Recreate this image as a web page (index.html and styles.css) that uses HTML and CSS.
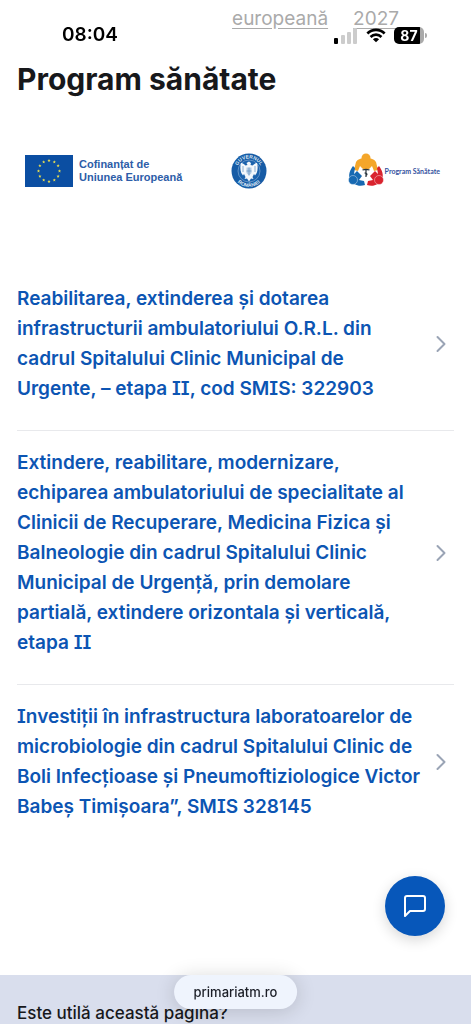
FILE: index.html
```
<!DOCTYPE html>
<html lang="ro">
<head>
    <meta charset="UTF-8">
    <meta name="viewport" content="width=device-width, initial-scale=1.0">
    <title>Program sănătate</title>
    <link rel="stylesheet" href="styles.css">
</head>
<body>
    <!-- Phone status bar -->
    <div class="status-bar">
        <span class="status-time">08:04</span>
        <div class="status-icons">
            <svg class="signal" width="24" height="17" viewBox="0 0 24 17" aria-hidden="true">
                <rect x="0" y="11" width="4" height="6" rx="1" fill="#000"/>
                <rect x="7" y="8" width="4" height="9" rx="1" fill="#ccc"/>
                <rect x="13" y="5" width="4" height="12" rx="1" fill="#ccc"/>
                <rect x="19" y="1" width="4" height="16" rx="1" fill="#ccc"/>
            </svg>
            <svg width="20" height="15" viewBox="0 0 22 16" fill="none" stroke="#000" stroke-width="3" aria-hidden="true">
                <path d="M1.500 5.800C7 .4 15 .4 20.500 5.800"/>
                <path d="M5 9.600c3.500-3.300 8.500-3.300 12 0"/>
                <path d="M11 15.500 7.600 12c2-1.700 4.800-1.700 6.800 0z" fill="#000" stroke="none"/>
            </svg>
            <span class="battery">87</span>
        </div>
    </div>

    <nav class="breadcrumb">
        <a href="#">europeană</a>
        <a href="#">2027</a>
    </nav>

    <main class="content">
        <h1>Program sănătate</h1>

        <div class="logos">
            <div class="logo-eu">
                <svg width="48" height="32" viewBox="0 0 48 32" aria-hidden="true">
                    <defs>
                        <path id="star" d="M0-1.700.45-.5 1.600-.5.7.25 1 1.400 0 .75-1 1.400-.7.25-1.600-.5-.45-.5z" fill="#f2e34c"/>
                    </defs>
                    <rect width="48" height="32" fill="#0b4ea2"/>
                    <use href="#star" x="24" y="5.500"/>
                    <use href="#star" x="29.300" y="6.900"/>
                    <use href="#star" x="33.100" y="10.700"/>
                    <use href="#star" x="34.500" y="16"/>
                    <use href="#star" x="33.100" y="21.300"/>
                    <use href="#star" x="29.300" y="25.100"/>
                    <use href="#star" x="24" y="26.500"/>
                    <use href="#star" x="18.700" y="25.100"/>
                    <use href="#star" x="14.900" y="21.300"/>
                    <use href="#star" x="13.500" y="16"/>
                    <use href="#star" x="14.900" y="10.700"/>
                    <use href="#star" x="18.700" y="6.900"/>
                </svg>
                <span>Cofinanțat de<br>Uniunea Europeană</span>
            </div>

            <svg class="logo-gov" width="36" height="36" viewBox="0 0 36 36" role="img" aria-label="Guvernul României">
                <defs>
                    <path id="arc-top" d="M5.500 18a12.500 12.500 0 0 1 25 0"/>
                    <path id="arc-bottom" d="M2 18a16 16 0 0 0 32 0"/>
                </defs>
                <circle cx="18" cy="18" r="17.500" fill="#175ca6"/>
                <circle cx="18" cy="18" r="11" fill="#1b62ac" stroke="#a9c5e2" stroke-width=".5"/>
                <text class="seal-text"><textPath href="#arc-top" startOffset="50%" text-anchor="middle">GUVERNUL</textPath></text>
                <text class="seal-text"><textPath href="#arc-bottom" startOffset="50%" text-anchor="middle">ROMÂNIEI</textPath></text>
                <path d="M18 8.500l2 1.500-.5 2 2 .5c2-2 3.500-2.500 4.500-2.500 1 3 .8 7-.3 10l-1.700 2.500-1-1.500-1.500 3 1 2-2.500-.5-2 3-2-3-2.500.5 1-2-1.500-3-1 1.500-1.700-2.500C9.200 17 9 13 10 10c1 0 2.500.5 4.500 2.500l2-.5-1-2z" fill="#f3f7fb"/>
                <path d="M15.500 14.500h5v5.500L18 22.500 15.500 20z" fill="#b3cbe3"/>
                <path d="M18 14.500v8M15.500 18h5M12 13v6M24 13v6" stroke="#5f8fc0" stroke-width=".7"/>
            </svg>

            <div class="logo-health">
                <svg width="36" height="36" viewBox="0 0 36 36" aria-hidden="true">
                    <path d="M8 9c2-3 5-4 10-4s8 1 10 4l2 8-4 1-2-5-3 3h-6l-3-3-2 5-4-1z" fill="#f4a62a"/>
                    <circle cx="18" cy="5" r="4.500" fill="#f4a62a"/>
                    <path d="M5 13c-3 4-5 9-3 13 3 6 9 8 15 6l-1-4-5-1 3-4-5-5-3 3 1-6z" fill="#1769b2"/>
                    <circle cx="5" cy="27" r="4.500" fill="#1769b2" stroke="#fff" stroke-width=".4"/>
                    <path d="M31 13c3 4 5 9 3 13-3 6-9 8-15 6l1-4 5-1-3-4 5-5 3 3-1-6z" fill="#d9232e"/>
                    <circle cx="31" cy="27" r="4.500" fill="#d9232e" stroke="#fff" stroke-width=".4"/>
                    <path d="M18 16v8M14.500 17c2-.8 5-.8 7 0M16.500 20c3 0 3 1.500 1.500 2.500" fill="none" stroke="#28343d" stroke-width="1.200"/>
                </svg>
                <span>Program Sănătate</span>
            </div>
        </div>

        <ul class="project-list">
            <li>
                <a class="project" href="#">
                    <span class="project-title">Reabilitarea, extinderea și dotarea infrastructurii ambulatoriului O.R.L. din cadrul Spitalului Clinic Municipal de Urgente, – etapa II, cod SMIS: 322903</span>
                    <svg class="chevron" width="10" height="18" viewBox="0 0 10 18" aria-hidden="true"><path d="M1.500 2 8.500 9l-7 7"/></svg>
                </a>
            </li>
            <li>
                <a class="project" href="#">
                    <span class="project-title">Extindere, reabilitare, modernizare, echiparea ambulatoriului de specialitate al Clinicii de Recuperare, Medicina Fizica și Balneologie din cadrul Spitalului Clinic Municipal de Urgență, prin demolare partială, extindere orizontala și verticală, etapa II</span>
                    <svg class="chevron" width="10" height="18" viewBox="0 0 10 18" aria-hidden="true"><path d="M1.500 2 8.500 9l-7 7"/></svg>
                </a>
            </li>
            <li>
                <a class="project" href="#">
                    <span class="project-title">Investiții în infrastructura laboratoarelor de microbiologie din cadrul Spitalului Clinic de Boli <span class="plain-i">Infecțioase</span> și Pneumoftiziologice Victor Babeș Timișoara”, SMIS 328145</span>
                    <svg class="chevron" width="10" height="18" viewBox="0 0 10 18" aria-hidden="true"><path d="M1.500 2 8.500 9l-7 7"/></svg>
                </a>
            </li>
        </ul>
    </main>

    <footer class="feedback">
        <p>Este utilă această pagină?</p>
    </footer>

    <button class="chat-button" type="button" aria-label="Deschide chat">
        <svg width="24" height="24" viewBox="0 0 24 24" aria-hidden="true">
            <path d="M2 22V4a2 2 0 0 1 2-2h16a2 2 0 0 1 2 2v11a2 2 0 0 1-2 2H7z"/>
        </svg>
    </button>

    <!-- Collapsed browser address bar -->
    <button class="address-pill" type="button">primariatm.ro</button>
</body>
</html>
```
FILE: styles.css
```
* { box-sizing: border-box; }
body { margin: 0; min-height: 100vh; display: flex; flex-direction: column; background: #fff; color: #17181b; font-family: Inter, "Liberation Sans", sans-serif; }
h1, p, ul { margin: 0; padding: 0; }
ul { list-style: none; }

/* Status bar */
.status-bar { position: fixed; top: 0; left: 0; right: 0; z-index: 2; display: flex; justify-content: space-between; align-items: center; padding: 24px 47px 0 62px; color: #000; }
.status-time { font-size: 19px; line-height: 22px; font-weight: 600; }
.status-icons { display: flex; align-items: center; gap: 8px; }
.battery { position: relative; width: 30px; height: 17px; border-radius: 5px; background: linear-gradient(90deg, #000 26px, #aaa 26px); color: #fff; font-size: 14px; line-height: 17px; font-weight: 700; text-align: center; }
.battery::after { content: ""; position: absolute; right: -3px; top: 6px; width: 2px; height: 5px; border-radius: 0 2px 2px 0; background: #aaa; }

/* Breadcrumb */
.breadcrumb { display: flex; justify-content: flex-end; gap: 25px; padding: 7px 72px 0 17px; font-size: 19px; line-height: 24px; }
.breadcrumb a { color: #aaa; text-underline-offset: 3px; }

/* Content */
.content { padding: 28px 17px 0; }
h1 { font-size: 30px; line-height: 40px; font-weight: 700; }
.logos { display: flex; justify-content: space-between; align-items: center; height: 56px; margin: 44px 14px 0 8px; }
.logo-eu { display: flex; align-items: center; gap: 6px; color: #2d5da8; font-family: "Liberation Sans", sans-serif; font-size: 11px; line-height: 13px; font-weight: 700; }
.logo-gov { margin-right: 32px; }
.seal-text { fill: #dce8f4; font-family: "Liberation Sans", sans-serif; font-size: 5px; font-weight: 700; }
.logo-health { display: flex; align-items: center; gap: 1px; color: #3552a0; font-family: Lato, sans-serif; font-size: 7px; line-height: 10px; font-weight: 700; }

/* Project list */
.project-list { margin-top: 68px; }
.project-list li + li { border-top: 1px solid #e8e9ec; }
.project { display: flex; align-items: center; justify-content: space-between; gap: 12px; padding: 17px 8px 26px 0; color: #0c55b3; text-decoration: none; }
.project-title { font-size: 19px; line-height: 30px; font-weight: 600; font-feature-settings: "cv08"; }
.plain-i { font-feature-settings: normal; }
.chevron { flex: none; fill: none; stroke: #9aa4b5; stroke-width: 2; stroke-linecap: round; stroke-linejoin: round; }

/* Feedback footer */
.feedback { margin-top: auto; padding: 27px 17px 0; background: #d9deed; font-size: 17px; line-height: 22px; font-weight: 500; }

/* Floating controls */
.chat-button { position: fixed; right: 26px; bottom: 88px; display: flex; align-items: center; justify-content: center; width: 60px; height: 60px; padding: 0; border: 0; border-radius: 50%; background: #0757ba; box-shadow: 0 4px 14px rgba(0,0,0,0.16); }
.chat-button svg { fill: none; stroke: #fff; stroke-width: 2; stroke-linejoin: round; }
.address-pill { position: fixed; left: 50%; bottom: 15px; transform: translateX(-50%); height: 34px; padding: 0 20px; border: 0; border-radius: 17px; background: #eff4fd; color: #1b1e27; box-shadow: 0 2px 20px rgba(0,0,0,0.16); font-family: Inter, sans-serif; font-size: 13px; line-height: 18px; font-weight: 500; }
```
